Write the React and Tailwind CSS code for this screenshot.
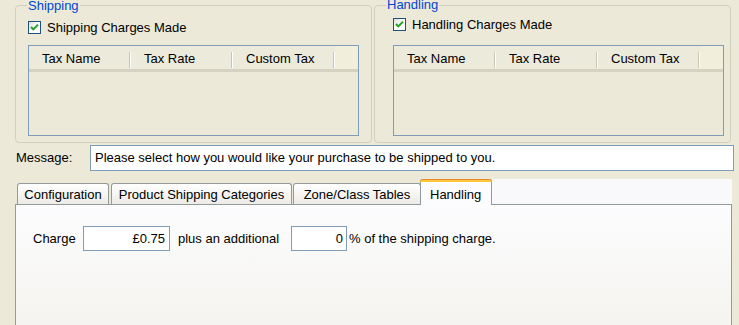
const FONT = { fontFamily: '"Liberation Sans", Arial, sans-serif' };

function Check() {
  return (
    <span className="relative w-[13px] h-[13px] border border-[#1C5180] bg-gradient-to-br from-[#DCDCD7] via-white to-white shrink-0">
      <svg width="11" height="11" viewBox="0 0 11 11" className="absolute left-0 top-0">
        <path d="M2 5 L4.3 7.4 L9 2.6" fill="none" stroke="#21A121" strokeWidth="2" />
      </svg>
    </span>
  );
}

function TaxList() {
  const cols = ["Tax Name", "Tax Rate", "Custom Tax"];
  return (
    <div className="w-[331px] h-[91px] border border-[#7F9DB9] bg-[#ECE9D8] flex flex-col">
      <div className="flex h-[26px] bg-[#EBEADB] border-b-[3px] border-[#D6D2C2]">
        {cols.map((c) => (
          <div key={c} className="w-[102px] h-full flex items-center pl-[13px] pt-[3px] relative">
            {c}
            <span className="absolute right-0 top-[6px] h-[16px] w-[2px] border-l border-[#C7C5B2] bg-white" />
          </div>
        ))}
        <div className="flex-1 bg-[#F2EEDC]" />
      </div>
    </div>
  );
}

function Tab({ label, w, ml }) {
  return (
    <div
      className={`${w} ${ml} h-[21px] border border-b-0 border-[#919B9C] rounded-t-[3px] bg-gradient-to-b from-white to-[#ECEBE6] flex items-center justify-center pt-[1px]`}
    >
      {label}
    </div>
  );
}

export default function App() {
  return (
    <div style={FONT} className="w-[739px] h-[325px] bg-[#ECE9D8] overflow-hidden text-[13px] text-black flex flex-col">
      {/* group boxes */}
      <div className="flex pl-[15px] pt-[5px]">
        <div className="relative w-[357px] h-[138px] border border-[#D0D0BF] rounded-[4px] flex flex-col">
          <span className="absolute left-[11px] -top-[8px] px-[1px] bg-[#ECE9D8] text-[#0046D5] leading-[15px]">
            Shipping
          </span>
          <label className="flex items-center gap-[6px] h-[15px] mt-[14px] ml-[12px]">
            <Check />
            Shipping Charges Made
          </label>
          <div className="mt-[10px] ml-[12px]">
            <TaxList />
          </div>
        </div>

        <div className="relative ml-[2px] w-[357px] h-[138px] border border-[#D0D0BF] rounded-[4px] flex flex-col">
          <span className="absolute left-[11px] -top-[9px] px-[1px] bg-[#ECE9D8] text-[#0046D5] leading-[15px]">
            Handling
          </span>
          <label className="flex items-center gap-[6px] h-[15px] mt-[11px] ml-[18px]">
            <Check />
            Handling Charges Made
          </label>
          <div className="mt-[13px] ml-[18px]">
            <TaxList />
          </div>
        </div>
      </div>

      {/* message */}
      <div className="flex items-center pl-[16px] mt-[2px] h-[26px]">
        <span className="w-[74px]">Message:</span>
        <div className="w-[644px] h-[26px] border border-[#7F9DB9] bg-white flex items-center pl-[4px]">
          Please select how you would like your purchase to be shipped to you.
        </div>
      </div>

      {/* tabs */}
      <div className="flex items-end ml-[15px] w-[717px] h-[25px] mt-[8px] pl-[2px]">
        <Tab label="Configuration" w="w-[92px]" ml="ml-0" />
        <Tab label="Product Shipping Categories" w="w-[181px]" ml="ml-[2px]" />
        <Tab label="Zone/Class Tables" w="w-[128px]" ml="ml-[1px]" />
        <div className="relative z-10 -ml-[1px] -mb-[1px] w-[72px] h-[26px] border-x border-[#919B9C] rounded-t-[3px] bg-[#FCFCFE] flex flex-col">
          <div className="h-[3px] rounded-t-[3px] border-t border-[#E68B2C] bg-[#FFC73C] -mx-[1px]" />
          <div className="flex-1 flex items-start pl-[9px] pt-[3px]">Handling</div>
        </div>
        <div className="flex-1 self-stretch bg-[#F9F9FC]" />
      </div>

      {/* panel */}
      <div className="ml-[15px] w-[717px] flex-1 min-h-[140px] border border-[#919B9C] bg-gradient-to-b from-[#FCFCFE] to-[#F4F3EE]">
        <div className="flex items-center pt-[21px] pl-[17px]">
          <span className="w-[50px]">Charge</span>
          <div className="w-[87px] h-[25px] border border-[#7F9DB9] bg-white flex items-center justify-end pr-[4px]">
            £0.75
          </div>
          <span className="w-[121px] pl-[8px]">plus an additional</span>
          <div className="w-[56px] h-[25px] border border-[#7F9DB9] bg-white flex items-center justify-end pr-[3px]">
            0
          </div>
          <span className="ml-[2px]">% of the shipping charge.</span>
        </div>
      </div>
    </div>
  );
}
